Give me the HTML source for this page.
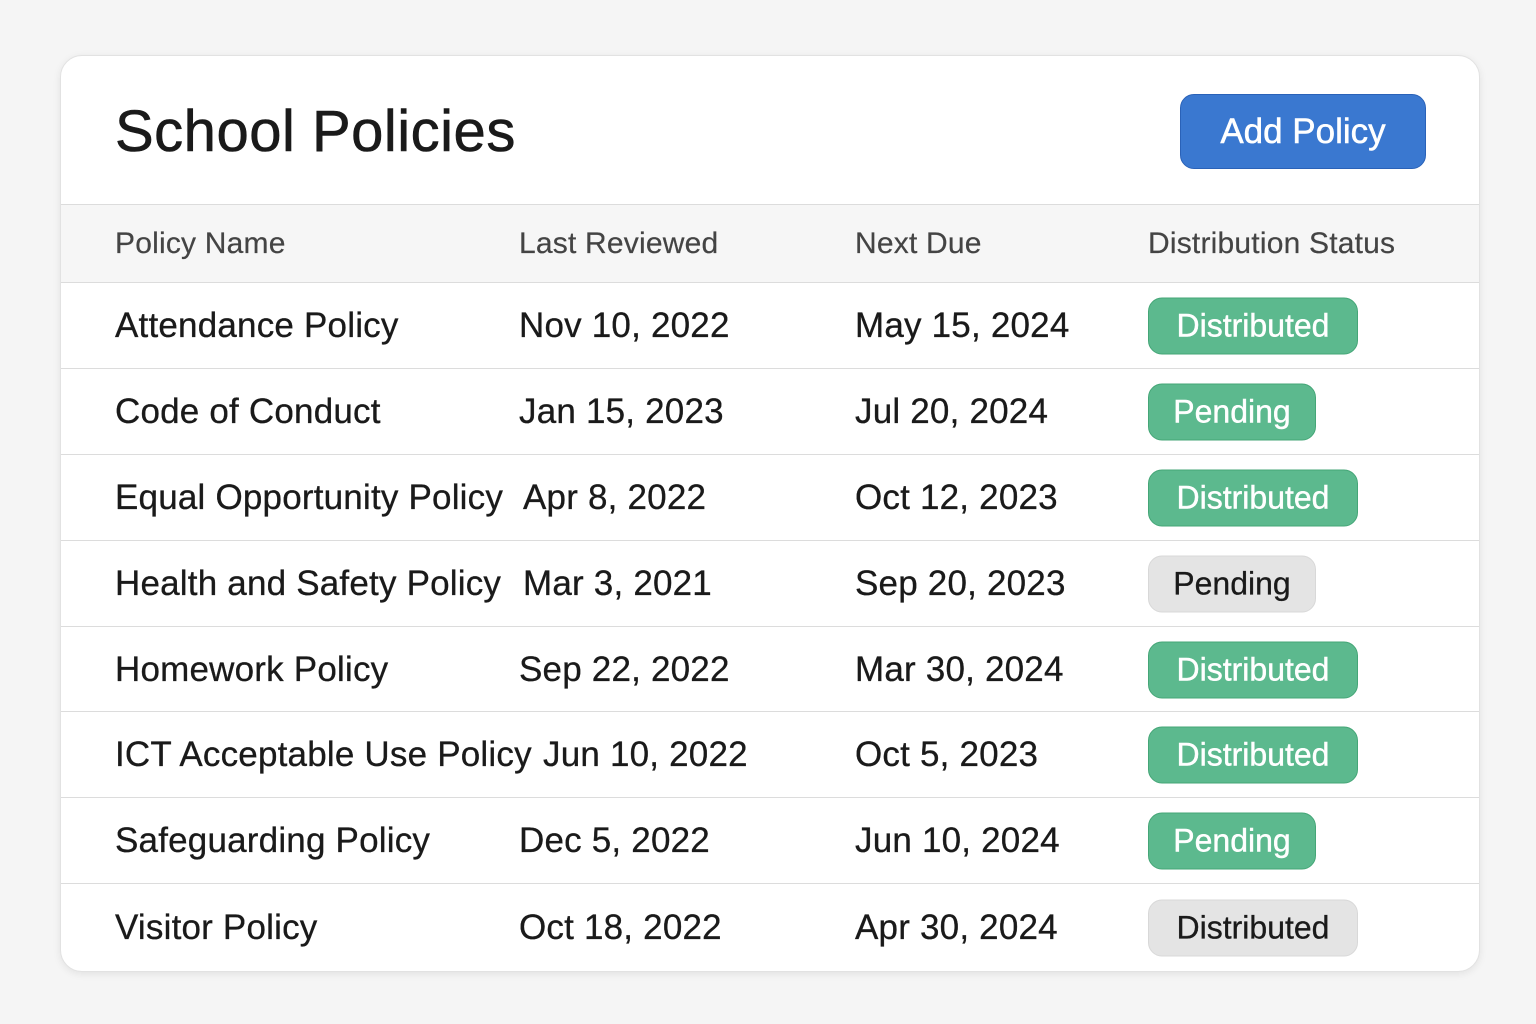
<!DOCTYPE html>
<html><head><style>
body{margin:0;width:1536px;height:1024px;background:#f5f5f5;font-family:"Liberation Sans",sans-serif;position:relative;overflow:hidden}
.card{position:absolute;left:60px;top:55px;width:1418px;height:915px;background:#fff;border:1px solid #e2e2e2;border-radius:22px;box-shadow:0 2px 8px rgba(0,0,0,.08);overflow:hidden}
h1{position:absolute;left:54px;top:42px;margin:0;font-size:58px;font-weight:normal;color:#1a1a1a;letter-spacing:0.5px;-webkit-text-stroke:0.6px #1a1a1a}
.btn{position:absolute;left:1119px;top:38px;width:244px;height:73px;background:#3a78d0;border:1px solid #2a62b8;border-radius:14px;color:#fff;font-size:35px;line-height:73px;text-align:center;-webkit-text-stroke:0.5px #fff}
.row{position:absolute;left:0;width:1418px;border-top:1px solid #dcdcdc;font-size:35px;color:#1a1a1a;letter-spacing:0.2px;-webkit-text-stroke:0.3px #1a1a1a}
.row span{position:absolute;top:50%;transform:translateY(-50%);white-space:nowrap}
.hdr{background:#f6f6f6;color:#444;font-size:30px;-webkit-text-stroke:0.2px #444}
.b{position:absolute;left:1087px;top:50%;transform:translateY(-50%);height:55px;line-height:55px;border-radius:14px;text-align:center;font-size:32px;letter-spacing:0}
.g{background:#5cb98e;border:1px solid #45a677;color:#fff;-webkit-text-stroke:0.4px #fff}
.y{background:#e4e4e4;border:1px solid #d8d8d8;color:#1a1a1a}
.w1{width:208px}.w2{width:166px}
</style></head><body>
<div class="card">
<h1>School Policies</h1>
<div class="btn">Add Policy</div>
<div class="row hdr" style="top:148px;height:78px"><span style="left:54px">Policy Name</span><span style="left:458px">Last Reviewed</span><span style="left:794px">Next Due</span><span style="left:1087px">Distribution Status</span></div>
<div class="row" style="top:226px;height:86px"><span style="left:54px">Attendance Policy</span><span style="left:458px">Nov 10, 2022</span><span style="left:794px">May 15, 2024</span><div class="b g w1">Distributed</div></div>
<div class="row" style="top:312px;height:86px"><span style="left:54px">Code of Conduct</span><span style="left:458px">Jan 15, 2023</span><span style="left:794px">Jul 20, 2024</span><div class="b g w2">Pending</div></div>
<div class="row" style="top:398px;height:86px"><span style="left:54px">Equal Opportunity Policy</span><span style="left:462px">Apr 8, 2022</span><span style="left:794px">Oct 12, 2023</span><div class="b g w1">Distributed</div></div>
<div class="row" style="top:484px;height:86px"><span style="left:54px">Health and Safety Policy</span><span style="left:462px">Mar 3, 2021</span><span style="left:794px">Sep 20, 2023</span><div class="b y w2">Pending</div></div>
<div class="row" style="top:570px;height:85px"><span style="left:54px">Homework Policy</span><span style="left:458px">Sep 22, 2022</span><span style="left:794px">Mar 30, 2024</span><div class="b g w1">Distributed</div></div>
<div class="row" style="top:655px;height:86px"><span style="left:54px">ICT Acceptable Use Policy</span><span style="left:482px">Jun 10, 2022</span><span style="left:794px">Oct 5, 2023</span><div class="b g w1">Distributed</div></div>
<div class="row" style="top:741px;height:86px"><span style="left:54px">Safeguarding Policy</span><span style="left:458px">Dec 5, 2022</span><span style="left:794px">Jun 10, 2024</span><div class="b g w2">Pending</div></div>
<div class="row" style="top:827px;height:88px"><span style="left:54px">Visitor Policy</span><span style="left:458px">Oct 18, 2022</span><span style="left:794px">Apr 30, 2024</span><div class="b y w1">Distributed</div></div>
</div>
</body></html>
